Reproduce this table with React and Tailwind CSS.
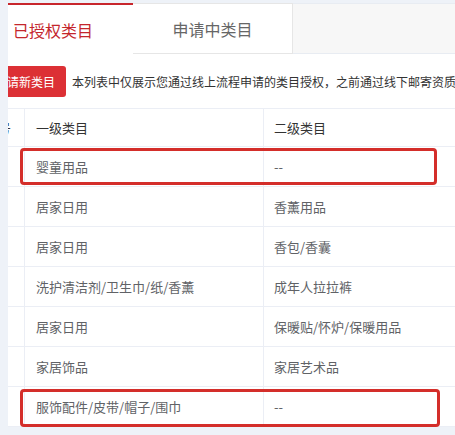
const rows = [
  { a: "婴童用品", b: "--", mark: "top-[1px] h-[37px] w-[417px]" },
  { a: "居家日用", b: "香薰用品" },
  { a: "居家日用", b: "香包/香囊" },
  { a: "洗护清洁剂/卫生巾/纸/香薰", b: "成年人拉拉裤" },
  { a: "居家日用", b: "保暖贴/怀炉/保暖用品" },
  { a: "家居饰品", b: "家居艺术品" },
  { a: "服饰配件/皮带/帽子/围巾", b: "--", mark: "top-[2px] h-[38px] w-[420px]" },
];

export default function App() {
  return (
    <div
      className="w-[455px] h-[435px] bg-[#eef2f8] flex items-start pt-[3px] overflow-hidden"
      style={{ fontFamily: '"Noto Sans CJK SC", "Noto Sans", sans-serif' }}
    >
      {/* left gutter */}
      <div className="w-2 shrink-0" />

      <div className="flex-1 bg-white overflow-hidden">
        {/* Tabs */}
        <div className="flex h-[51px]">
          <div className="w-[160px] ml-[-35px] shrink-0 border-t-2 border-[#c8262c] bg-white flex items-center justify-center text-[16px] text-[#c4262c]">
            已授权类目
          </div>
          <div className="w-[160px] shrink-0 border-t border-b border-r border-[#e6e6e6] bg-white flex items-center justify-center text-[16px] text-[#666]">
            申请中类目
          </div>
          <div className="flex-1 border-t border-b border-[#e8ecf2] bg-[#f7f7f7]" />
        </div>

        {/* Notice */}
        <div className="flex items-center mt-[12px] whitespace-nowrap">
          <div className="ml-[-24px] h-[31px] px-[11px] flex items-center bg-[#dc3035] text-white text-[12px] rounded-[3px] shrink-0">
            申请新类目
          </div>
          <span className="ml-[6px] text-[12px] text-[#333]">
            本列表中仅展示您通过线上流程申请的类目授权，之前通过线下邮寄资质申请的类目请联系客服查询
          </span>
        </div>

        {/* Table */}
        <div className="mt-[11px] ml-[-34px] text-[13px] whitespace-nowrap">
          <div className="flex h-[39px] border-t border-b border-[#ebeef5] text-[#333]">
            <div className="w-[50px] shrink-0 flex items-center justify-end pr-[13px]">序号</div>
            <div className="w-[239px] shrink-0 border-l border-[#ebeef5] flex items-center pl-[11px]">一级类目</div>
            <div className="flex-1 border-l border-[#ebeef5] flex items-center pl-[10px]">二级类目</div>
          </div>
          {rows.map((r, i) => (
            <div key={i} className="relative flex h-[40px] border-b border-[#ebeef5] text-[#606266]">
              <div className="w-[50px] shrink-0" />
              <div className="w-[239px] shrink-0 border-l border-[#ebeef5] flex items-center pl-[11px]">{r.a}</div>
              <div className="flex-1 border-l border-[#ebeef5] flex items-center pl-[10px]">{r.b}</div>
              {r.mark && (
                <div className={`absolute left-[46px] ${r.mark} border-[3px] border-[#d42e2a] rounded-[4px]`} />
              )}
            </div>
          ))}
        </div>
      </div>
    </div>
  );
}
